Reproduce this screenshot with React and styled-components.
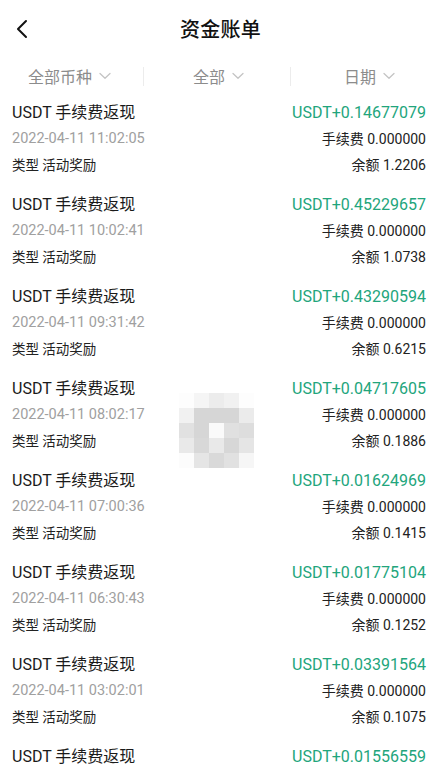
import React from "react";
import styled, { createGlobalStyle } from "styled-components";

const Global = createGlobalStyle`
  html, body { margin: 0; padding: 0; background: #fff; }
  body { font-family: Roboto, "Noto Sans CJK SC", "Noto Sans", sans-serif; -webkit-font-smoothing: antialiased; }
  * { box-sizing: border-box; }
`;

const Page = styled.div`
  position: relative;
  width: 441px;
  height: 769px;
  overflow: hidden;
  background: #fff;
`;

const Header = styled.div`
  height: 56px;
  display: flex;
  align-items: center;
  justify-content: center;
  position: relative;
`;

const Back = styled.button`
  position: absolute;
  left: 10px;
  top: 16px;
  width: 24px;
  height: 26px;
  border: 0;
  background: none;
  padding: 0;
  display: flex;
  align-items: center;
  justify-content: center;
`;

const Title = styled.h1`
  margin: 0;
  font-size: 20px;
  font-weight: 500;
  color: #111;
  letter-spacing: 0.3px;
`;

const Filters = styled.div`
  display: grid;
  grid-template-columns: 1fr 1fr 1fr;
  height: 40px;
  align-items: center;
`;

const Filter = styled.div`
  display: flex;
  align-items: center;
  justify-content: center;
  gap: 7px;
  font-size: 16px;
  color: #8c8c8c;
  position: relative;
  height: 100%;
  margin-left: ${(p) => p.$shift || 0}px;
  &::before {
    content: "";
    display: ${(p) => (p.$divider ? "block" : "none")};
    position: absolute;
    left: ${(p) => -4 - (p.$shift || 0)}px;
    top: 11px;
    width: 1px;
    height: 19px;
    background: #ececec;
  }
`;

const List = styled.div`
  padding: 4px 15px 0 12px;
`;

const Row = styled.div`
  display: flex;
  justify-content: space-between;
  padding-bottom: 14px;
`;

const Col = styled.div`
  display: flex;
  flex-direction: column;
  align-items: ${(p) => (p.$right ? "flex-end" : "flex-start")};
`;

const Line = styled.div`
  height: 26px;
  line-height: 26px;
  white-space: nowrap;
  font-size: ${(p) => p.$size}px;
  color: ${(p) => p.$color};
`;

const Mosaic = styled.svg`
  position: absolute;
  left: 179px;
  top: 393px;
`;

const Chevron = () => (
  <svg width="12" height="8" viewBox="0 0 12 8">
    <path d="M1 1.5 L6 6.2 L11 1.5" fill="none" stroke="#c4c4c4" strokeWidth="1.3" strokeLinecap="round" strokeLinejoin="round" />
  </svg>
);

const data = [
  ["0.14677079", "11:02:05", "1.2206"],
  ["0.45229657", "10:02:41", "1.0738"],
  ["0.43290594", "09:31:42", "0.6215"],
  ["0.04717605", "08:02:17", "0.1886"],
  ["0.01624969", "07:00:36", "0.1415"],
  ["0.01775104", "06:30:43", "0.1252"],
  ["0.03391564", "03:02:01", "0.1075"],
  ["0.01556559", "02:02:11", "0.0916"],
];

const mosaic = [
  ["#fdfdfd", "#f5f5f5", "#ececec", "#f1f1f1", "#fdfdfd"],
  ["#f1f1f1", "#d6d6d6", "#d6d6d6", "#d6d6d6", "#ebebeb"],
  ["#e1e1e1", "#d6d6d6", "#fafafa", "#e0e0e0", "#dddddd"],
  ["#e9e9e9", "#d8d8d8", "#e9e9e9", "#d7d7d7", "#e5e5e5"],
  ["#fcfcfc", "#e5e5e5", "#d9d9d9", "#e1e1e1", "#f6f6f6"],
];

export default function App() {
  return (
    <Page>
      <Global />
      <Header>
        <Back aria-label="back">
          <svg width="14" height="20" viewBox="0 0 14 20">
            <path d="M11 2 L3 10 L11 18" fill="none" stroke="#111" strokeWidth="2" strokeLinecap="round" strokeLinejoin="round" />
          </svg>
        </Back>
        <Title>资金账单</Title>
      </Header>
      <Filters>
        <Filter $shift={-8}>全部币种 <Chevron /></Filter>
        <Filter $divider $shift={-4}>全部 <Chevron /></Filter>
        <Filter $divider $shift={4}>日期 <Chevron /></Filter>
      </Filters>
      <List>
        {data.map(([amt, time, bal], i) => (
          <Row key={i}>
            <Col>
              <Line $size={16} $color="#1a1a1a">USDT 手续费返现</Line>
              <Line $size={14.5} $color="#a0a0a0">2022-04-11 {time}</Line>
              <Line $size={13.5} $color="#222">类型 活动奖励</Line>
            </Col>
            <Col $right>
              <Line $size={16} $color="#22a57c">USDT+{amt}</Line>
              <Line $size={14} $color="#222">手续费 0.000000</Line>
              <Line $size={14} $color="#222">余额 {bal}</Line>
            </Col>
          </Row>
        ))}
      </List>
      <Mosaic width="75" height="75" viewBox="0 0 75 75">
        {mosaic.map((r, y) =>
          r.map((c, x) => <rect key={`${x}-${y}`} x={x * 15} y={y * 15} width="15" height="15" fill={c} />)
        )}
      </Mosaic>
    </Page>
  );
}
